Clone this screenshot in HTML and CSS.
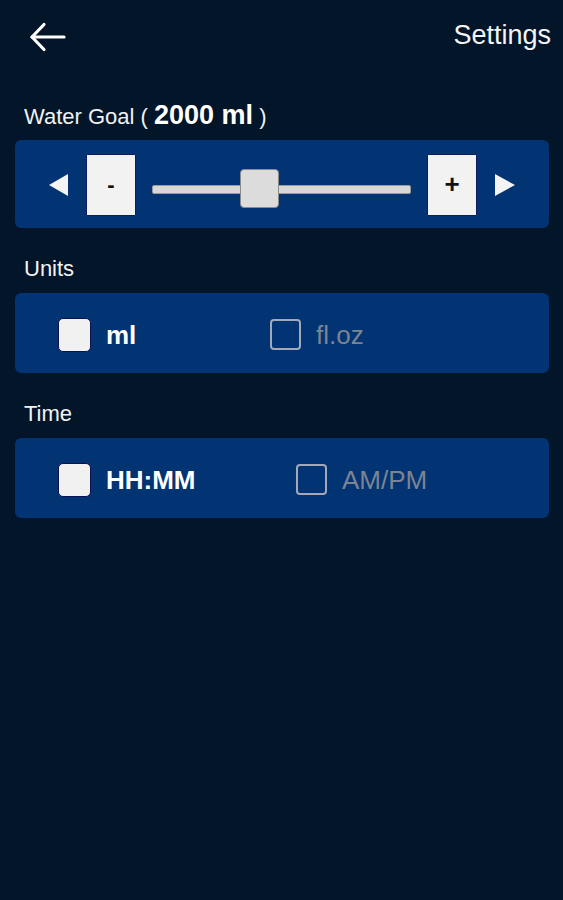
FILE: index.html
```html
<!DOCTYPE html>
<html lang="en">
<head>
<meta charset="utf-8">
<title>Settings</title>
<link rel="stylesheet" href="styles.css">
</head>
<body>
<div class="app">
  <header class="topbar">
    <button class="back" aria-label="Back">
      <svg width="38" height="32" viewBox="0 0 38 32" fill="none" stroke="#ffffff" stroke-width="3.2" stroke-linecap="round" stroke-linejoin="round">
        <path d="M3 16 H35"/>
        <path d="M15 3.5 L3 16 L15 28.5"/>
      </svg>
    </button>
    <h1 class="title">Settings</h1>
  </header>

  <div class="goal-label">Water Goal ( <span class="goal-value">2000 ml</span> )</div>
  <section class="panel slider-panel">
    <span class="tri tri--left"></span>
    <button class="step-btn step-btn--minus">-</button>
    <div class="track">
      <div class="thumb"></div>
    </div>
    <button class="step-btn step-btn--plus">+</button>
    <span class="tri tri--right"></span>
  </section>

  <div class="section-label">Units</div>
  <section class="panel option-row units-row">
    <label class="option">
      <span class="box box--checked"></span>
      <span class="opt-text opt-text--on">ml</span>
    </label>
    <label class="option">
      <span class="box"></span>
      <span class="opt-text">fl.oz</span>
    </label>
  </section>

  <div class="section-label">Time</div>
  <section class="panel option-row time-row">
    <label class="option">
      <span class="box box--checked"></span>
      <span class="opt-text opt-text--on">HH:MM</span>
    </label>
    <label class="option">
      <span class="box"></span>
      <span class="opt-text">AM/PM</span>
    </label>
  </section>
</div>
</body>
</html>
```

FILE: styles.css
```css
* { box-sizing: border-box; }

html, body {
  margin: 0;
  padding: 0;
  background: #021529;
}

body {
  width: 563px;
  height: 900px;
  font-family: "Liberation Sans", Arial, sans-serif;
  color: #f2f2f2;
}

.app {
  display: flex;
  flex-direction: column;
}

.topbar {
  height: 74px;
  display: flex;
  justify-content: space-between;
  align-items: flex-start;
  padding: 0 12px 0 29px;
}

.back {
  margin-top: 21px;
  padding: 0;
  border: 0;
  background: none;
  display: flex;
}

.title {
  margin: 20px 0 0 0;
  font-size: 27px;
  line-height: 30px;
  font-weight: normal;
  color: #f4f4f4;
}

.goal-label {
  margin: 25px 0 7px 24px;
  font-size: 22px;
  line-height: 32px;
  height: 34px;
  color: #f2f2f2;
}

.goal-value {
  font-size: 27px;
  font-weight: bold;
  color: #ffffff;
}

.panel {
  margin: 0 14px 0 15px;
  background: #023373;
  border-radius: 6px;
}

.slider-panel {
  height: 88px;
  display: flex;
  align-items: center;
  padding: 1px 34px 0;
}

.tri {
  width: 0;
  height: 0;
  border-top: 11px solid transparent;
  border-bottom: 11px solid transparent;
}

.tri--left {
  border-right: 19px solid #f4f4f4;
  margin-right: 18px;
}

.tri--right {
  border-left: 20px solid #f4f4f4;
  margin-left: 18px;
}

.step-btn {
  width: 50px;
  height: 62px;
  padding: 0;
  background: #f2f2f2;
  border: 1.5px solid #12195e;
  border-radius: 1px;
  font-family: "Liberation Sans", Arial, sans-serif;
  font-weight: bold;
  color: #111111;
  display: flex;
  align-items: center;
  justify-content: center;
}

.step-btn--minus { font-size: 22px; }
.step-btn--plus { font-size: 26px; }

.track {
  flex: 1;
  height: 9px;
  margin: 9px 16px 0;
  background: #d8d8d8;
  border: 1px solid #9a9a9a;
  border-radius: 2px;
  position: relative;
}

.thumb {
  position: absolute;
  left: 87px;
  top: -17px;
  width: 39px;
  height: 39px;
  background: #dcdcdc;
  border: 1.5px solid #8a8a8a;
  border-radius: 4px;
}

.section-label {
  margin: 28px 0 11px 24px;
  font-size: 22px;
  line-height: 26px;
  color: #f2f2f2;
}

.option-row {
  height: 80px;
  display: flex;
  align-items: center;
  padding: 3px 0 0 43px;
}

.units-row .option:first-child { width: 212px; }
.time-row .option:first-child { width: 238px; }

.option {
  display: flex;
  align-items: center;
  gap: 15px;
}

.box {
  width: 31px;
  height: 31px;
  border: 2px solid #a2a9ba;
  border-radius: 4px;
}

.box--checked {
  width: 33px;
  height: 34px;
  background: #f1f1f1;
  border: 1.5px solid #0b1250;
  border-radius: 5px;
}

.opt-text {
  font-size: 26px;
  line-height: 30px;
  color: #7d8491;
}

.opt-text--on {
  font-weight: bold;
  color: #ffffff;
}
```
